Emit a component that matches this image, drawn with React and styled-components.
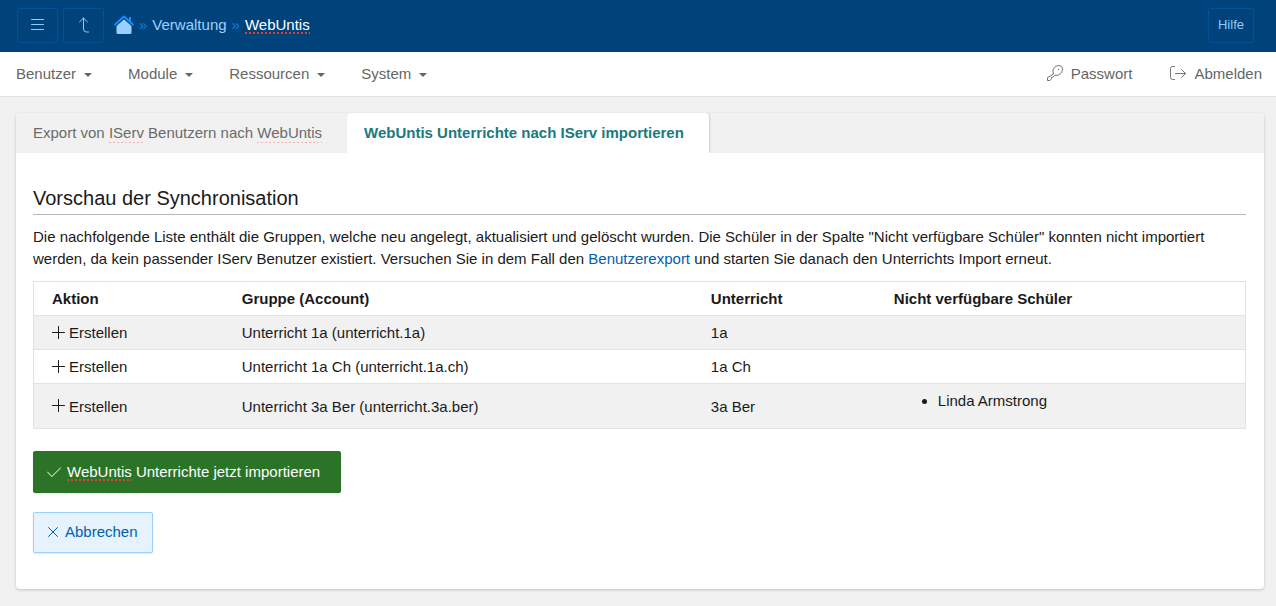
import React from 'react';
import styled, { createGlobalStyle } from 'styled-components';

const GlobalStyle = createGlobalStyle`
  *, *::before, *::after {
    box-sizing: border-box;
  }

  body {
    margin: 0;
    background: #f1f1f1;
    color: #1a1a1a;
    font-family: 'Liberation Sans', Arial, sans-serif;
    font-size: 15px;
    line-height: 22px;
  }

  a {
    text-decoration: none;
  }

  button {
    font: inherit;
    cursor: pointer;
  }
`;

const Header = styled.header`
  display: flex;
  align-items: center;
  height: 52px;
  padding: 0 22px 1px 17px;
  background: #00427a;
`;

const HeaderButton = styled.button`
  display: flex;
  align-items: center;
  justify-content: center;
  height: 35px;
  width: ${props => (props.$wide ? '46px' : '41px')};
  margin-right: ${props => (props.$wide ? '0' : '5px')};
  padding: 0 0 2px;
  border: 1px solid #00529b;
  border-radius: 2px;
  background: transparent;
  color: #8fcbff;
  font-size: 13px;
`;

const Breadcrumb = styled.nav`
  display: flex;
  flex: 1;
  align-items: center;
  gap: 5px;
  padding: 0 0 2px 5px;
`;

const HomeLink = styled.a`
  display: flex;
`;

const Separator = styled.span`
  color: #0b7fe0;
`;

const Crumb = styled.a`
  color: ${props => (props.$current ? '#fff' : '#9dd2ff')};
`;

const Misspelled = styled.span`
  padding-bottom: ${props => (props.$faint ? '2px' : '1px')};
  background: repeating-linear-gradient(
      90deg,
      ${props => (props.$faint ? '#efb5b5' : '#e0403a')} 0 2px,
      transparent 2px 4px
    )
    left bottom / 100% ${props => (props.$faint ? '1px' : '2px')} no-repeat;
`;

const MainNav = styled.nav`
  display: flex;
  justify-content: space-between;
  height: 45px;
  padding: 0 14px 0 16px;
  border-bottom: 1px solid #e2e2e2;
  background: #fff;
`;

const NavGroup = styled.div`
  display: flex;
  align-items: center;
  gap: ${props => props.$gap};
`;

const NavItem = styled.a`
  display: flex;
  align-items: center;
  gap: 8px;
  color: #666;

  svg {
    margin-bottom: 2px;
  }
`;

const Caret = styled.span`
  margin-top: 2px;
  border: 4px solid transparent;
  border-top-color: currentColor;
  border-bottom: 0;
`;

const Card = styled.main`
  margin: 16px 12px 17px 16px;
  padding-bottom: 36px;
  border-radius: 4px;
  background: #fff;
  box-shadow: 0 1px 3px rgba(0, 0, 0, 0.2);
`;

const Tabs = styled.div`
  display: flex;
  height: 40px;
  border-radius: 4px 4px 0 0;
  background: #f1f1f1;
`;

const Tab = styled.button`
  padding: 0 25px 0 17px;
  border: 0;
  border-radius: 4px 4px 0 0;
  background: transparent;
  color: #6b6b6b;

  &[aria-selected='true'] {
    background: #fff;
    box-shadow: 1px 0 2px rgba(0, 0, 0, 0.15);
    color: #1b7a7d;
    font-weight: bold;
    clip-path: inset(0 -3px 0 0);
  }
`;

const Content = styled.section`
  padding: 32px 18px 0 17px;
`;

const Heading = styled.h2`
  margin: 0 0 11px;
  padding-bottom: 3px;
  border-bottom: 1px solid #b8b8b8;
  font-size: 20px;
  font-weight: normal;
  line-height: 26px;
`;

const Intro = styled.p`
  margin: 0 0 11px;

  a {
    color: #0060b0;
  }
`;

const Table = styled.table`
  width: 100%;
  margin-bottom: 22px;
  border: 1px solid #e2e2e2;
  border-collapse: collapse;
  table-layout: fixed;

  th,
  td {
    padding: 6px 18px 5px;
    border-top: 1px solid #e2e2e2;
    text-align: left;
  }

  tbody tr:nth-child(odd) {
    background: #f1f1f1;
  }
`;

const Column = styled.col`
  width: ${props => props.$width};
`;

const Action = styled.span`
  display: flex;
  align-items: center;
  gap: 4px;

  svg {
    margin-bottom: 2px;
  }
`;

const StudentList = styled.ul`
  margin: 0 0 11px;
  padding-left: 44px;
`;

const Actions = styled.div`
  display: flex;
  flex-direction: column;
  align-items: flex-start;
  gap: 19px;
`;

const ActionButton = styled.button`
  display: flex;
  align-items: center;
  gap: 6px;
  height: 41px;
  padding: 0 14px 1px 13px;
  border: 1px solid #99d0ff;
  border-radius: 2px;
  background: #e6f3ff;
  color: #0060b0;
  box-shadow: 0 1px 2px rgba(0, 0, 0, 0.1);
`;

const PrimaryButton = styled(ActionButton)`
  height: 42px;
  padding-right: 20px;
  border-color: #2b7326;
  background: #2b7326;
  color: #fff;
`;

const Icon = ({ width = 16, height = 16, children }) => (
  <svg
    width={width}
    height={height}
    viewBox={`0 0 ${width} ${height}`}
    fill="none"
    stroke="currentColor"
    strokeLinecap="round"
    strokeLinejoin="round"
    aria-hidden="true"
  >
    {children}
  </svg>
);

const MenuIcon = () => (
  <Icon width={13} height={15}>
    <path d="M.5 2.5h12M.5 7.5h12M.5 12.5h12" />
  </Icon>
);

const UpIcon = () => (
  <Icon width={17} height={17}>
    <path d="M4.5 6l4-4 4 4M8.5 2v11q0 3 3 3h2" />
  </Icon>
);

const HomeIcon = () => (
  <svg width="20" height="20" viewBox="0 0 20 20" aria-hidden="true">
    <path d="M10 4l7.500 7v6.500q0 1.500-1.500 1.500H4q-1.500 0-1.500-1.500V11z" fill="#99d0ff" />
    <path d="M15 2h2v5l-2-2z" fill="#1a8cff" />
    <path d="M1.200 9.600L10 1.600l8.800 8" fill="none" stroke="#1a8cff" strokeWidth="2" strokeLinecap="round" strokeLinejoin="round" />
    <path d="M2.200 10.600L10 3.500l7.800 7.100" fill="none" stroke="#00427a" />
  </svg>
);

const KeyIcon = () => (
  <Icon>
    <path d="M6.200 8.800Q4.800 5 7.500 2.300 9.500.5 12 .5q3.500 0 3.500 3.500 0 2.500-1.800 4.500-2.700 2.700-6.200 1.800l-1.500 2H4.500v1.500L3 15.500H.5V13z" strokeWidth=".9" />
    <path d="M11.500 4.500h.1" />
  </Icon>
);

const LogoutIcon = () => (
  <Icon>
    <path d="M4.500 1.500h-2q-2 0-2 2v9q0 2 2 2h2M5.500 8.500h10M11.500 4.500l4 4-4 4" strokeWidth=".9" />
  </Icon>
);

const PlusIcon = () => (
  <Icon width={13} height={13}>
    <path d="M6.500.5v12M.5 6.500h12" />
  </Icon>
);

const CheckIcon = () => (
  <Icon width={14} height={14}>
    <path d="M.5 7l4.300 4.500L13.500 3" />
  </Icon>
);

const CloseIcon = () => (
  <Icon width={12} height={12}>
    <path d="M1.500 1.500l9 9M10.500 1.500l-9 9" />
  </Icon>
);

const menus = ['Benutzer', 'Module', 'Ressourcen', 'System'];

const groups = [
  { name: 'Unterricht 1a (unterricht.1a)', lesson: '1a', missing: [] },
  { name: 'Unterricht 1a Ch (unterricht.1a.ch)', lesson: '1a Ch', missing: [] },
  { name: 'Unterricht 3a Ber (unterricht.3a.ber)', lesson: '3a Ber', missing: ['Linda Armstrong'] },
];

const GroupTable = () => (
  <Table>
    <colgroup>
      <Column $width="15.7%" />
      <Column $width="38.7%" />
      <Column $width="15.1%" />
      <Column />
    </colgroup>
    <thead>
      <tr>
        <th scope="col">Aktion</th>
        <th scope="col">Gruppe (Account)</th>
        <th scope="col">Unterricht</th>
        <th scope="col">Nicht verfügbare Schüler</th>
      </tr>
    </thead>
    <tbody>
      {groups.map(group => (
        <tr key={group.name}>
          <td>
            <Action>
              <PlusIcon />
              Erstellen
            </Action>
          </td>
          <td>{group.name}</td>
          <td>{group.lesson}</td>
          <td>
            {group.missing.length > 0 && (
              <StudentList>
                {group.missing.map(student => (
                  <li key={student}>{student}</li>
                ))}
              </StudentList>
            )}
          </td>
        </tr>
      ))}
    </tbody>
  </Table>
);

const App = () => (
  <>
    <GlobalStyle />
    <Header>
      <HeaderButton type="button" aria-label="Menü">
        <MenuIcon />
      </HeaderButton>
      <HeaderButton type="button" aria-label="Nach oben">
        <UpIcon />
      </HeaderButton>
      <Breadcrumb aria-label="Brotkrumen">
        <HomeLink href="#" aria-label="Startseite">
          <HomeIcon />
        </HomeLink>
        <Separator>»</Separator>
        <Crumb href="#">Verwaltung</Crumb>
        <Separator>»</Separator>
        <Crumb href="#" $current>
          <Misspelled>WebUntis</Misspelled>
        </Crumb>
      </Breadcrumb>
      <HeaderButton type="button" $wide>
        Hilfe
      </HeaderButton>
    </Header>
    <MainNav>
      <NavGroup $gap="36px">
        {menus.map(menu => (
          <NavItem key={menu} href="#">
            {menu}
            <Caret />
          </NavItem>
        ))}
      </NavGroup>
      <NavGroup $gap="38px">
        <NavItem href="#">
          <KeyIcon />
          Passwort
        </NavItem>
        <NavItem href="#">
          <LogoutIcon />
          Abmelden
        </NavItem>
      </NavGroup>
    </MainNav>
    <Card>
      <Tabs role="tablist">
        <Tab type="button" role="tab" aria-selected="false">
          Export von <Misspelled $faint>IServ</Misspelled> Benutzern nach <Misspelled $faint>WebUntis</Misspelled>
        </Tab>
        <Tab type="button" role="tab" aria-selected="true">
          WebUntis Unterrichte nach IServ importieren
        </Tab>
      </Tabs>
      <Content>
        <Heading>Vorschau der Synchronisation</Heading>
        <Intro>
          Die nachfolgende Liste enthält die Gruppen, welche neu angelegt, aktualisiert und gelöscht wurden. Die
          Schüler in der Spalte "Nicht verfügbare Schüler" konnten nicht importiert werden, da kein passender IServ
          Benutzer existiert. Versuchen Sie in dem Fall den <a href="#">Benutzerexport</a> und starten Sie danach den
          Unterrichts Import erneut.
        </Intro>
        <GroupTable />
        <Actions>
          <PrimaryButton type="button">
            <CheckIcon />
            <span>
              <Misspelled>WebUntis</Misspelled> Unterrichte jetzt importieren
            </span>
          </PrimaryButton>
          <ActionButton type="button">
            <CloseIcon />
            Abbrechen
          </ActionButton>
        </Actions>
      </Content>
    </Card>
  </>
);

export default App;
